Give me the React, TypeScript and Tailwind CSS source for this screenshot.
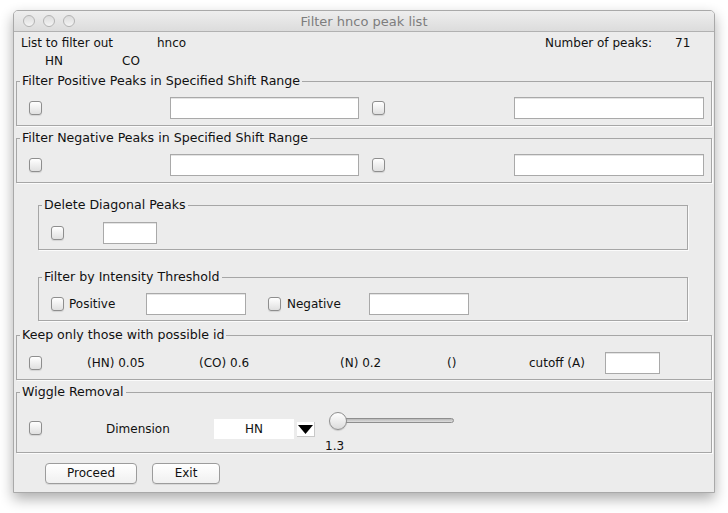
import React from 'react';

const Checkbox: React.FC<{ className?: string }> = ({ className = '' }) => (
  <span
    className={`block w-[13px] h-[14px] shrink-0 rounded-[3px] border border-[#8e8e8e] bg-linear-to-b from-white to-[#e0e0e0] shadow-[0_1px_1px_rgba(0,0,0,0.1)] ${className}`}
  />
);

const Field: React.FC<{ className?: string }> = ({ className = '' }) => (
  <span
    className={`block h-[22px] shrink-0 bg-white border border-[#a9a9a9] shadow-[inset_0_1px_0_#e4e4e4] ${className}`}
  />
);

const Section: React.FC<{ title: string; className?: string; children: React.ReactNode }> = ({
  title,
  className = '',
  children,
}) => (
  <fieldset className={`border border-[#a6a6a6] shadow-[1px_1px_0_#fbfbfb] ${className}`}>
    <legend className="ml-[3px] px-[2px] text-[12.6px] leading-[16px]">{title}</legend>
    {children}
  </fieldset>
);

const TrafficLight: React.FC = () => (
  <span className="block w-[12px] h-[12px] rounded-full border border-[#b3b3b3] bg-linear-to-b from-[#dcdcdc] to-[#f4f4f4]" />
);

const App: React.FC = () => {
  return (
    <div
      className="w-[728px] h-[513px] bg-white pt-[10px] pl-[13px] text-[12px] text-[#111]"
      style={{ fontFamily: '"DejaVu Sans", "Liberation Sans", sans-serif' }}
    >
      <div className="w-[702px] h-[483px] flex flex-col rounded-t-[5px] border border-[#a9a9a9] bg-[#ececec] shadow-[0_6px_14px_rgba(0,0,0,0.32)] overflow-hidden">
        {/* Title bar */}
        <div className="relative h-[21px] shrink-0 flex items-center border-b border-[#b1b1b1] bg-linear-to-b from-[#eeeeee] to-[#dcdcdc]">
          <div className="flex gap-[8px] pl-[9px]">
            <TrafficLight />
            <TrafficLight />
            <TrafficLight />
          </div>
          <span className="absolute inset-x-0 text-center text-[13px] leading-[21px] text-[#7d7d7d]">
            Filter hnco peak list
          </span>
        </div>

        {/* Header rows */}
        <div className="mt-[2px] h-[18px] flex items-center pl-[7px] leading-[18px]">
          <span className="w-[136px]">List to filter out</span>
          <span className="flex-1">hnco</span>
          <span className="w-[130px]">Number of peaks:</span>
          <span className="w-[39px]">71</span>
        </div>
        <div className="h-[18px] flex items-center pl-[31px] leading-[18px]">
          <span className="w-[77px]">HN</span>
          <span>CO</span>
        </div>

        {/* Positive peaks */}
        <Section title="Filter Positive Peaks in Specified Shift Range" className="mt-[3px] mx-[2px]">
          <div className="flex items-center pt-[8px] pb-[6px]">
            <Checkbox className="ml-[12px]" />
            <Field className="ml-[128px] w-[189px]" />
            <Checkbox className="ml-[13px]" />
            <Field className="ml-[129px] w-[190px]" />
          </div>
        </Section>

        {/* Negative peaks */}
        <Section title="Filter Negative Peaks in Specified Shift Range" className="mt-[4px] mx-[2px]">
          <div className="flex items-center pt-[8px] pb-[6px]">
            <Checkbox className="ml-[12px]" />
            <Field className="ml-[128px] w-[189px]" />
            <Checkbox className="ml-[13px]" />
            <Field className="ml-[129px] w-[190px]" />
          </div>
        </Section>

        {/* Diagonal peaks */}
        <Section title="Delete Diagonal Peaks" className="mt-[14px] ml-[24px] w-[650px]">
          <div className="flex items-center pt-[9px] pb-[5px]">
            <Checkbox className="ml-[12px]" />
            <Field className="ml-[39px] w-[54px]" />
          </div>
        </Section>

        {/* Intensity threshold */}
        <Section title="Filter by Intensity Threshold" className="mt-[19px] ml-[24px] w-[650px]">
          <div className="flex items-center pt-[8px] pb-[5px]">
            <Checkbox className="ml-[12px]" />
            <span className="ml-[5px] w-[77px]">Positive</span>
            <Field className="w-[100px]" />
            <Checkbox className="ml-[22px]" />
            <span className="ml-[6px] w-[82px]">Negative</span>
            <Field className="w-[100px]" />
          </div>
        </Section>

        {/* Possible id */}
        <Section title="Keep only those with possible id" className="mt-[6px] mx-[2px]">
          <div className="flex items-center pt-[9px] pb-[5px]">
            <Checkbox className="ml-[12px]" />
            <span className="ml-[45px] w-[112px]">(HN) 0.05</span>
            <span className="w-[141px]">(CO) 0.6</span>
            <span className="w-[107px]">(N) 0.2</span>
            <span className="w-[82px]">()</span>
            <span className="w-[76px]">cutoff (A)</span>
            <Field className="w-[55px]" />
          </div>
        </Section>

        {/* Wiggle removal */}
        <Section title="Wiggle Removal" className="mt-[4px] mx-[2px]">
          <div className="flex items-start h-[52px]">
            <Checkbox className="ml-[12px] mt-[21px]" />
            <span className="ml-[64px] mt-[21px] w-[108px] leading-[16px]">Dimension</span>
            <span className="mt-[19px] w-[80px] h-[20px] bg-white text-center leading-[21px]">HN</span>
            <span className="ml-[3px] mt-[22px] w-[18px] h-[15px] flex items-center justify-center bg-white border-r border-b border-[#c8c8c8]">
              <svg width="15" height="9" viewBox="0 0 15 9">
                <path d="M0 0 H15 L7.5 9 Z" fill="#000" />
              </svg>
            </span>
            <div className="ml-[14px] mt-[12px] flex flex-col">
              <div className="relative w-[125px] h-[18px]">
                <span className="absolute left-[9px] top-[6px] w-[116px] h-[5px] rounded-full border border-[#8e8e8e] bg-linear-to-b from-[#b9b9b9] to-[#dedede]" />
                <span className="absolute left-0 top-0 w-[18px] h-[18px] rounded-full border border-[#8f8f8f] bg-linear-to-b from-white to-[#dcdcdc] shadow-[0_1px_1px_rgba(0,0,0,0.15)]" />
              </div>
              <span className="-ml-[4px] mt-[9px] leading-[14px]">1.3</span>
            </div>
          </div>
        </Section>

        {/* Buttons */}
        <div className="mt-[10px] flex gap-[15px] pl-[31px]">
          <button className="w-[92px] h-[21px] rounded-[4px] border border-[#9c9c9c] bg-linear-to-b from-white to-[#f0f0f0] leading-[19px] shadow-[0_1px_0_rgba(0,0,0,0.08)]">
            Proceed
          </button>
          <button className="w-[68px] h-[21px] rounded-[4px] border border-[#9c9c9c] bg-linear-to-b from-white to-[#f0f0f0] leading-[19px] shadow-[0_1px_0_rgba(0,0,0,0.08)]">
            Exit
          </button>
        </div>
      </div>
    </div>
  );
};

export default App;
